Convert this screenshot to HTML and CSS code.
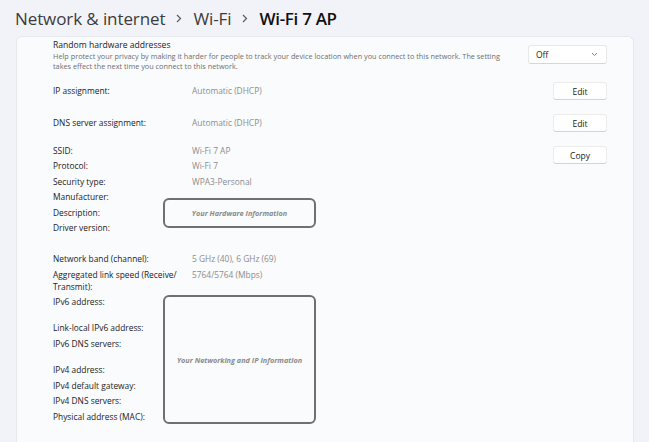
FILE: index.html
```html
<!DOCTYPE html>
<html lang="en">
<head>
  <meta charset="UTF-8">
  <meta name="viewport" content="width=device-width, initial-scale=1.0">
  <title>Wi-Fi 7 AP</title>
  <link rel="stylesheet" href="styles.css">
</head>
<body>
  <div class="page">
    <h1 class="crumbs">
      <span class="crumb">Network &amp; internet</span>
      <svg class="sep" width="6" height="9" viewBox="0 0 6 9"><path d="M1 1 L4.5 4.5 L1 8" fill="none" stroke="#5a5a5a" stroke-width="1.2"/></svg>
      <span class="crumb">Wi-Fi</span>
      <svg class="sep" width="6" height="9" viewBox="0 0 6 9"><path d="M1 1 L4.5 4.5 L1 8" fill="none" stroke="#5a5a5a" stroke-width="1.2"/></svg>
      <span class="crumb current">Wi-Fi 7 AP</span>
    </h1>

    <div class="card">
      <div class="random">
        <div class="random-text">
          <div class="random-title">Random hardware addresses</div>
          <div class="random-desc">Help protect your privacy by making it harder for people to track your device location when you connect to this network. The setting<br>takes effect the next time you connect to this network.</div>
        </div>
        <div class="select">
          <span>Off</span>
          <svg width="7" height="5" viewBox="0 0 7 5"><path d="M1 1 L3.5 3.5 L6 1" fill="none" stroke="#777" stroke-width="0.9"/></svg>
        </div>
      </div>

      <div class="setting">
        <div class="label">IP assignment:</div>
        <div class="value">Automatic (DHCP)</div>
        <button class="btn">Edit</button>
      </div>
      <div class="setting">
        <div class="label">DNS server assignment:</div>
        <div class="value">Automatic (DHCP)</div>
        <button class="btn">Edit</button>
      </div>

      <div class="props">
        <button class="btn copy">Copy</button>

        <div class="label">SSID:</div><div class="value">Wi-Fi 7 AP</div>
        <div class="label">Protocol:</div><div class="value">Wi-Fi 7</div>
        <div class="label">Security type:</div><div class="value">WPA3-Personal</div>
        <div class="label">Manufacturer:</div><div class="value"></div>
        <div class="label">Description:</div><div class="value"></div>
        <div class="label">Driver version:</div><div class="value"></div>
        <div class="spacer"></div>
        <div class="label">Network band (channel):</div><div class="value">5 GHz (40), 6 GHz (69)</div>
        <div class="label">Aggregated link speed (Receive/ Transmit):</div><div class="value">5764/5764 (Mbps)</div>
        <div class="label tall">IPv6 address:</div><div class="value"></div>
        <div class="label">Link-local IPv6 address:</div><div class="value"></div>
        <div class="label tall">IPv6 DNS servers:</div><div class="value"></div>
        <div class="label">IPv4 address:</div><div class="value"></div>
        <div class="label">IPv4 default gateway:</div><div class="value"></div>
        <div class="label">IPv4 DNS servers:</div><div class="value"></div>
        <div class="label">Physical address (MAC):</div><div class="value"></div>

        <div class="redact hardware">Your Hardware Information</div>
        <div class="redact networking">Your Networking and IP Information</div>
      </div>
    </div>
  </div>
</body>
</html>
```

FILE: styles.css
```css
body {
  margin: 0;
  background-color: #f1f3f9;
  font-family: "Open Sans", "Noto Sans", sans-serif;
  color: #1b1b1b;
  overflow: hidden;
}

.page {
  padding: 0 15px 0 16px;
}

.crumbs {
  display: flex;
  align-items: center;
  gap: 10px;
  margin: 0;
  height: 36px;
  font-size: 17px;
  font-weight: 500;
  color: #3c3c3c;
  letter-spacing: -0.1px;
}

.crumbs .crumb:first-child {
  margin-left: -1px;
}

.crumbs .current {
  color: #111;
  font-weight: 600;
  letter-spacing: -0.3px;
}

.sep {
  margin: 0 1px;
}

.card {
  background-color: #fafbfd;
  border: 1px solid #e6e8ee;
  border-bottom: none;
  border-radius: 6px 6px 0 0;
  padding: 2px 26px 20px 36px;
  height: 420px;
}

.random {
  display: flex;
  justify-content: space-between;
  align-items: flex-start;
  height: 36px;
}

.random-title {
  font-size: 8.6px;
  line-height: 12px;
  color: #222;
}

.random-desc {
  font-size: 7.3px;
  line-height: 10px;
  color: #6e6e6e;
}

.select {
  display: flex;
  justify-content: space-between;
  align-items: center;
  box-sizing: border-box;
  width: 79px;
  height: 19px;
  margin-top: 6px;
  padding: 0 8px 0 7px;
  background-color: #fff;
  border: 1px solid #e8e8e8;
  border-bottom-color: #d6d6d6;
  border-radius: 3px;
  font-size: 8.5px;
}

.setting {
  display: grid;
  grid-template-columns: 139px 1fr 54px;
  align-items: center;
  height: 32px;
}

.label {
  font-size: 8.4px;
  line-height: 12px;
  color: #222;
}

.value {
  font-size: 8.4px;
  line-height: 12px;
  color: #8c8c8c;
}

.btn {
  box-sizing: border-box;
  width: 54px;
  height: 18px;
  padding: 0;
  background-color: #fff;
  border: 1px solid #ececec;
  border-bottom-color: #d4d4d4;
  border-radius: 3px;
  font-family: inherit;
  font-size: 8.5px;
  color: #1b1b1b;
}

.props {
  position: relative;
  display: grid;
  grid-template-columns: 139px 1fr 54px;
  row-gap: 3.45px;
  margin-top: 6px;
}

.props .label {
  grid-column: 1;
  padding-right: 6px;
}

.props .value {
  grid-column: 2;
}

.props .tall {
  min-height: 23px;
}

.props .spacer {
  grid-column: 1;
  height: 12px;
}

.copy {
  grid-column: 3;
  grid-row: 1 / span 2;
  align-self: start;
  margin-top: 1px;
}

/* annotation boxes drawn over the screenshot */
.redact {
  position: absolute;
  left: 110px;
  width: 153px;
  box-sizing: border-box;
  display: flex;
  align-items: center;
  justify-content: center;
  background-color: #fafbfd;
  border: 2px solid #707070;
  border-radius: 6px;
  font-size: 7.3px;
  font-weight: 700;
  font-style: italic;
  color: #8a8a8a;
}

.hardware {
  top: 53px;
  height: 30px;
}

.networking {
  top: 150px;
  height: 129px;
}
```
